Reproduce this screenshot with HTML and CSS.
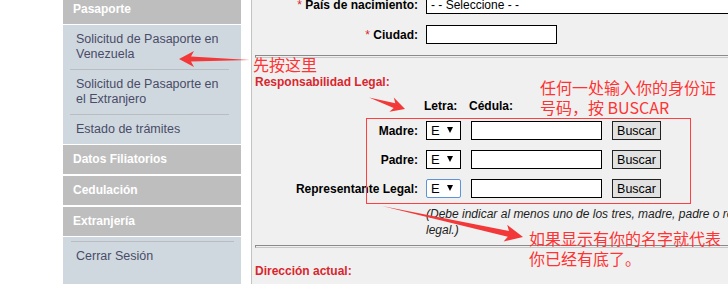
FILE: index.html
```html
<!DOCTYPE html>
<html lang="es">

<head>
    <meta charset="UTF-8">
    <meta name="viewport" content="width=device-width, initial-scale=1.0">
    <title>Datos del solicitante</title>
    <link rel="stylesheet" href="styles.css">
</head>

<body>
    <div id="page">
        <div id="side-menu">
            <div class="menu-head">Pasaporte</div>
            <ul class="menu-list">
                <li>Solicitud de Pasaporte en Venezuela</li>
                <li>Solicitud de Pasaporte en el Extranjero</li>
                <li>Estado de trámites</li>
            </ul>
            <div class="menu-head">Datos Filiatorios</div>
            <div class="menu-head">Cedulación</div>
            <div class="menu-head">Extranjería</div>
            <ul class="menu-list menu-bottom">
                <li>Cerrar Sesión</li>
            </ul>
        </div>

        <div id="main">
            <div class="row">
                <label for="pais"><span class="req">*</span> País de nacimiento:</label>
                <div class="pick wide">
                    <select id="pais">
                        <option>- - Seleccione - -</option>
                    </select>
                </div>
            </div>
            <div class="row">
                <label for="ciudad"><span class="req">*</span> Ciudad:</label>
                <input type="text" id="ciudad" class="text-input">
            </div>

            <hr class="sep">

            <h3 class="section">Responsabilidad Legal:</h3>

            <div class="id-head">
                <span></span>
                <span class="col-title">Letra:</span>
                <span class="col-title">Cédula:</span>
            </div>

            <div class="id-table">
                <div class="row">
                    <label for="madre">Madre:</label>
                    <div class="pick"><select><option>E</option></select></div>
                    <input type="text" id="madre" class="text-input">
                    <button type="button" class="buscar">Buscar</button>
                </div>
                <div class="row">
                    <label for="padre">Padre:</label>
                    <div class="pick"><select><option>E</option></select></div>
                    <input type="text" id="padre" class="text-input">
                    <button type="button" class="buscar">Buscar</button>
                </div>
                <div class="row">
                    <label for="representante">Representante Legal:</label>
                    <div class="pick focused"><select><option>E</option></select></div>
                    <input type="text" id="representante" class="text-input">
                    <button type="button" class="buscar">Buscar</button>
                </div>
            </div>

            <p class="hint">(Debe indicar al menos uno de los tres, madre, padre o representante<br>legal.)</p>

            <hr class="sep sep-low">

            <h3 class="section">Dirección actual:</h3>
        </div>
    </div>

    <!-- annotations drawn over the screenshot -->
    <svg class="marks" width="728" height="284" viewBox="0 0 728 284">
        <rect x="366.5" y="118.5" width="324" height="85" fill="none" stroke="#ff4040" />
        <polygon points="250,60 191,56.5 194,51 179,59 194,67 191,61.5" fill="#f23838" />
        <polygon points="369,97.5 395.3,103.3 393.8,97.6 405,109 389.4,111.8 393.7,108.1" fill="#f23838" />
        <polygon points="382,206 509,230.9 507.2,224.8 523,237 503.6,241.4 507.8,236.7" fill="#f23838" />
    </svg>
    <div class="note-cn note-first">先按这里</div>
    <div class="note-cn note-search">任何一处输入你的身份证<br>号码，按 BUSCAR</div>
    <div class="note-cn note-result">如果显示有你的名字就代表<br>你已经有底了。</div>
</body>

</html>
```

FILE: styles.css
```css
body {
    font-family: "Liberation Sans", Arial, sans-serif;
    font-size: 12px;
    background-color: #fff;
    margin: 0;
    height: 284px;
    position: relative;
    overflow: hidden;
}

#page {
    display: flex;
    margin-top: -5px;
    padding-left: 63px;
}

/* left menu */
#side-menu {
    width: 178px;
    flex: none;
}

.menu-head {
    height: 29px;
    line-height: 29px;
    padding-left: 10px;
    background-color: #bebebe;
    color: #fff;
    font-weight: bold;
    margin-bottom: 1px;
}

.menu-head + .menu-head {
    margin-top: 2px;
}

.menu-list {
    list-style: none;
    margin: 0 0 1px;
    padding: 0;
    background-color: #d0d8df;
}

.menu-list li {
    margin: 0 12px 0 7px;
    padding: 7px 3px 7px 6px;
    font-size: 12.5px;
    line-height: 15px;
    color: #494c68;
}

.menu-list li + li {
    border-top: 1px solid #b9bcc0;
}

.menu-bottom {
    padding-top: 4px;
    height: 80px;
}

.menu-bottom li {
    margin: 0 7px 0 8px;
    padding-left: 5px;
    border-top: 1px solid #b9bcc0;
}

/* form area */
#main {
    flex: 1;
    margin-left: 10px;
    border-left: 1px solid #c3c3c3;
    background-color: #f0f0f0;
    padding-left: 3px;
    height: 300px;
}

.row {
    display: grid;
    grid-template-columns: 161px 35px 131px 49px;
    column-gap: 10px;
    align-items: center;
    height: 19px;
    margin-bottom: 11px;
    white-space: nowrap;
}

.row label {
    text-align: right;
    font-weight: bold;
    margin-right: -2px;
}

.req {
    color: #d9262e;
    font-weight: normal;
}

.pick {
    display: flex;
    align-items: center;
    box-sizing: border-box;
    height: 19px;
    border: 1px solid #000;
    background-color: #fff;
}

.pick select {
    appearance: none;
    border: none;
    outline: none;
    background: transparent;
    font-family: "Liberation Sans", Arial, sans-serif;
    font-size: 13px;
    color: #000;
    width: 20px;
    height: 17px;
    padding: 0 0 0 4px;
}

.pick::after {
    content: "";
    margin-top: -2px;
    border-left: 3.5px solid transparent;
    border-right: 3.5px solid transparent;
    border-top: 6px solid #000;
}

.pick.wide {
    grid-column: 2 / -1;
    width: 340px;
}

.pick.wide select {
    width: 330px;
    font-size: 12px;
}

.pick.focused {
    border-color: #5f93d6;
    border-radius: 2px;
}

.text-input {
    box-sizing: border-box;
    width: 131px;
    height: 19px;
    border: 1px solid #000;
    background-color: #fff;
    padding: 0 3px;
    margin: 0;
}

.row > .text-input:nth-child(2) {
    grid-column: 2 / 4;
}

.buscar {
    box-sizing: border-box;
    width: 49px;
    height: 19px;
    padding: 0;
    border: 1px solid #222;
    background-color: #e1e1e1;
    font-family: "Liberation Sans", Arial, sans-serif;
    font-size: 12.5px;
    color: #000;
}

.sep {
    height: 1px;
    margin: 0 0 17px;
    border: 1px solid;
    border-color: #8a8a8a #c8c8c8 #c8c8c8 #8a8a8a;
    background: none;
}

.sep-low {
    margin: 7px 0 16px;
}

.section {
    margin: 0;
    color: #d9262e;
    font-size: 12px;
    line-height: 14px;
}

.id-head {
    display: grid;
    grid-template-columns: 161px 35px 131px;
    column-gap: 10px;
    margin: 10px 0 8px;
    line-height: 14px;
    font-weight: bold;
    white-space: nowrap;
}

.col-title {
    margin-left: -2px;
}

.id-table {
    display: flex;
    flex-direction: column;
    gap: 10px;
}

.id-table .row {
    margin-bottom: 0;
}

.hint {
    margin: 8px 0 0 171px;
    font-style: italic;
    line-height: 16px;
    color: #1e1e1e;
    white-space: nowrap;
}

/* annotations */
.marks {
    position: absolute;
    top: 0;
    left: 0;
    pointer-events: none;
}

.note-cn {
    position: absolute;
    color: #ff3333;
    font-family: "Noto Sans CJK SC", sans-serif;
    font-size: 16px;
    line-height: 20px;
    white-space: nowrap;
}

.note-first {
    left: 253px;
    top: 54px;
}

.note-search {
    left: 540px;
    top: 77px;
}

.note-result {
    left: 529px;
    top: 228px;
}
```
